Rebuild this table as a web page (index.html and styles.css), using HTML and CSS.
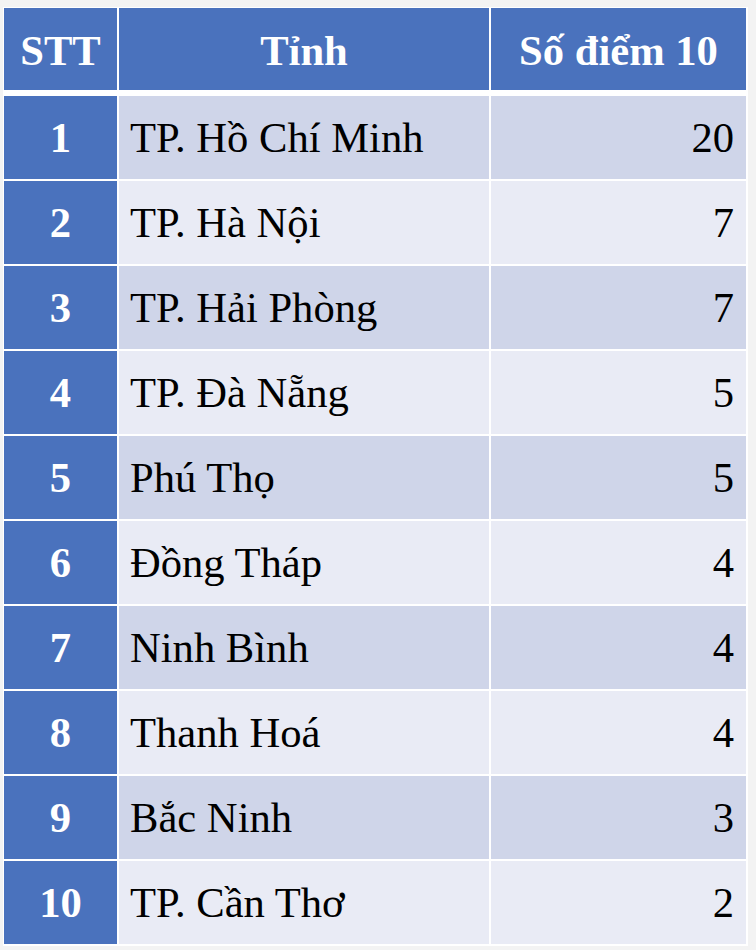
FILE: index.html
```html
<!DOCTYPE html>
<html lang="vi">
<head>
<meta charset="utf-8">
<title>Số điểm 10</title>
<link rel="stylesheet" href="styles.css">
</head>
<body>
<div class="table">
  <div class="row head">
    <div class="cell c1">STT</div>
    <div class="cell c2">Tỉnh</div>
    <div class="cell c3">Số điểm 10</div>
  </div>
  <div class="body">
    <div class="row odd"><div class="cell c1">1</div><div class="cell c2">TP. Hồ Chí Minh</div><div class="cell c3">20</div></div>
    <div class="row even"><div class="cell c1">2</div><div class="cell c2">TP. Hà Nội</div><div class="cell c3">7</div></div>
    <div class="row odd"><div class="cell c1">3</div><div class="cell c2">TP. Hải Phòng</div><div class="cell c3">7</div></div>
    <div class="row even"><div class="cell c1">4</div><div class="cell c2">TP. Đà Nẵng</div><div class="cell c3">5</div></div>
    <div class="row odd"><div class="cell c1">5</div><div class="cell c2">Phú Thọ</div><div class="cell c3">5</div></div>
    <div class="row even"><div class="cell c1">6</div><div class="cell c2">Đồng Tháp</div><div class="cell c3">4</div></div>
    <div class="row odd"><div class="cell c1">7</div><div class="cell c2">Ninh Bình</div><div class="cell c3">4</div></div>
    <div class="row even"><div class="cell c1">8</div><div class="cell c2">Thanh Hoá</div><div class="cell c3">4</div></div>
    <div class="row odd"><div class="cell c1">9</div><div class="cell c2">Bắc Ninh</div><div class="cell c3">3</div></div>
    <div class="row even"><div class="cell c1">10</div><div class="cell c2">TP. Cần Thơ</div><div class="cell c3">2</div></div>
  </div>
</div>
</body>
</html>
```
FILE: styles.css
```css
html, body {
  margin: 0;
  padding: 0;
  background: #f3f3f3;
}
body {
  font-family: "Liberation Serif", "Times New Roman", serif;
  font-size: 42.6px;
}
.table {
  margin: 7px 0 0 3px;
  width: max-content;
  background: #ffffff;
  padding: 1px 2px 2px 1px;
  display: flex;
  flex-direction: column;
  gap: 6px;
}
.body {
  display: flex;
  flex-direction: column;
  gap: 2px;
}
.row {
  display: grid;
  grid-template-columns: 113px 370px 255px;
  column-gap: 2px;
  height: 83px;
}
.row.head {
  height: 82px;
}
.cell {
  display: flex;
  align-items: center;
  white-space: nowrap;
  color: #000;
}
.head .cell {
  background: #4a72bd;
  color: #fff;
  font-weight: bold;
  justify-content: center;
  padding-top: 3px;
}
.c1 {
  background: #4a72bd;
  color: #fff;
  font-weight: bold;
  justify-content: center;
}
.body .c2 {
  padding-left: 11px;
}
.body .c3 {
  justify-content: flex-end;
  padding-right: 12px;
}
.odd .c2, .odd .c3 {
  background: #cfd5e9;
}
.even .c2, .even .c3 {
  background: #e9ebf5;
}
.body .c1 {
  background: #4a72bd;
  color: #fff;
}
```
